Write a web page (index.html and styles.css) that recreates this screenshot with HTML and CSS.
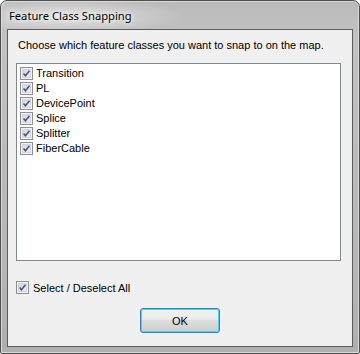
FILE: index.html
```html
<!DOCTYPE html>
<html lang="en">
<head>
    <meta charset="UTF-8">
    <title>Feature Class Snapping</title>
    <link rel="stylesheet" href="styles.css">
</head>
<body>

    <!-- Dialog window -->
    <div class="dialog">
        <div class="title-bar">
            <span class="title-text">Feature Class Snapping</span>
        </div>

        <div class="client">
            <p class="prompt">Choose which feature classes you want to snap to on the map.</p>

            <!-- Checked list of feature classes -->
            <ul class="class-list">
                <li class="class-item"><span class="check"><svg viewBox="0 0 13 13"><path d="M3 6.5 L5.3 9.2 L10 3.2" /></svg></span>Transition</li>
                <li class="class-item"><span class="check"><svg viewBox="0 0 13 13"><path d="M3 6.5 L5.3 9.2 L10 3.2" /></svg></span>PL</li>
                <li class="class-item"><span class="check"><svg viewBox="0 0 13 13"><path d="M3 6.5 L5.3 9.2 L10 3.2" /></svg></span>DevicePoint</li>
                <li class="class-item"><span class="check"><svg viewBox="0 0 13 13"><path d="M3 6.5 L5.3 9.2 L10 3.2" /></svg></span>Splice</li>
                <li class="class-item"><span class="check"><svg viewBox="0 0 13 13"><path d="M3 6.5 L5.3 9.2 L10 3.2" /></svg></span>Splitter</li>
                <li class="class-item"><span class="check"><svg viewBox="0 0 13 13"><path d="M3 6.5 L5.3 9.2 L10 3.2" /></svg></span>FiberCable</li>
            </ul>

            <label class="select-all">
                <span class="check"><svg viewBox="0 0 13 13"><path d="M3 6.5 L5.3 9.2 L10 3.2" /></svg></span>
                Select / Deselect All
            </label>

            <div class="button-row">
                <button class="ok-btn">OK</button>
            </div>
        </div>
    </div>

</body>
</html>
```

FILE: styles.css
```css
/* Reset */
* {
    margin: 0;
    padding: 0;
    box-sizing: border-box;
}

body {
    background: #fff;
    font-family: "Liberation Sans", Arial, sans-serif;
    font-size: 11px;
    color: #000;
}

/* Window frame */
.dialog {
    width: 360px;
    height: 354px;
    border: 1px solid #4f4f4f;
    border-radius: 7px 7px 2px 2px;
    background: linear-gradient(180deg, #bababa 0%, #c2c2c2 10%, #b0b0b0 100%);
    box-shadow: inset 1px 1px 0 #d8d8d8, inset -1px -1px 0 #d8d8d8;
    padding: 0 6px 6px 6px;
    display: flex;
    flex-direction: column;
}

.title-bar {
    height: 28px;
    display: flex;
    align-items: center;
    background: radial-gradient(ellipse 120px 18px at 65px 15px, rgba(232, 232, 232, 0.85), rgba(232, 232, 232, 0) 100%);
    margin: 0 -6px;
    padding-left: 8px;
}

.title-text {
    font-family: "Noto Sans", "Open Sans", sans-serif;
    font-size: 11.2px;
    color: #000;
    text-shadow: 0 0 6px #fff, 0 0 4px #fff;
}

/* Client area */
.client {
    flex: 1;
    border: 1px solid #5c5c5c;
    background: #f0f0f0;
    display: flex;
    flex-direction: column;
    padding: 9px 11px 0 8px;
}

.prompt {
    padding-left: 2px;
    line-height: 13px;
    height: 13px;
}

/* Checked list box */
.class-list {
    list-style: none;
    margin-top: 11px;
    height: 198px;
    background: #fff;
    border: 1px solid #828790;
    padding: 2px 3px;
}

.class-item {
    height: 15px;
    display: flex;
    align-items: center;
    gap: 3px;
    line-height: 13px;
}

/* Checkbox */
.check {
    width: 13px;
    height: 13px;
    border: 1px solid #8e8f8f;
    background: linear-gradient(135deg, #cbcfd5 0%, #f6f6f6 100%);
    box-shadow: inset 0 0 0 1px #f4f4f4, inset 0 0 0 2px #d2d5da;
    display: inline-flex;
    flex-shrink: 0;
}

.check svg {
    width: 11px;
    height: 11px;
}

.check path {
    fill: none;
    stroke: #3c5494;
    stroke-width: 1.8;
}

.select-all {
    display: flex;
    align-items: center;
    gap: 4px;
    margin-top: 20px;
    height: 13px;
}

/* Buttons */
.button-row {
    display: flex;
    justify-content: center;
    margin-top: 14px;
    padding-left: 3px;
}

.ok-btn {
    width: 80px;
    height: 25px;
    font-family: "Liberation Sans", Arial, sans-serif;
    font-size: 11px;
    color: #000;
    border: 1px solid #3c7fb1;
    border-radius: 3px;
    background: linear-gradient(180deg, #f2f2f2 0%, #ebebeb 45%, #dddddd 50%, #cfcfcf 100%);
    box-shadow: inset 0 0 0 1px #48d2f8;
}
```
